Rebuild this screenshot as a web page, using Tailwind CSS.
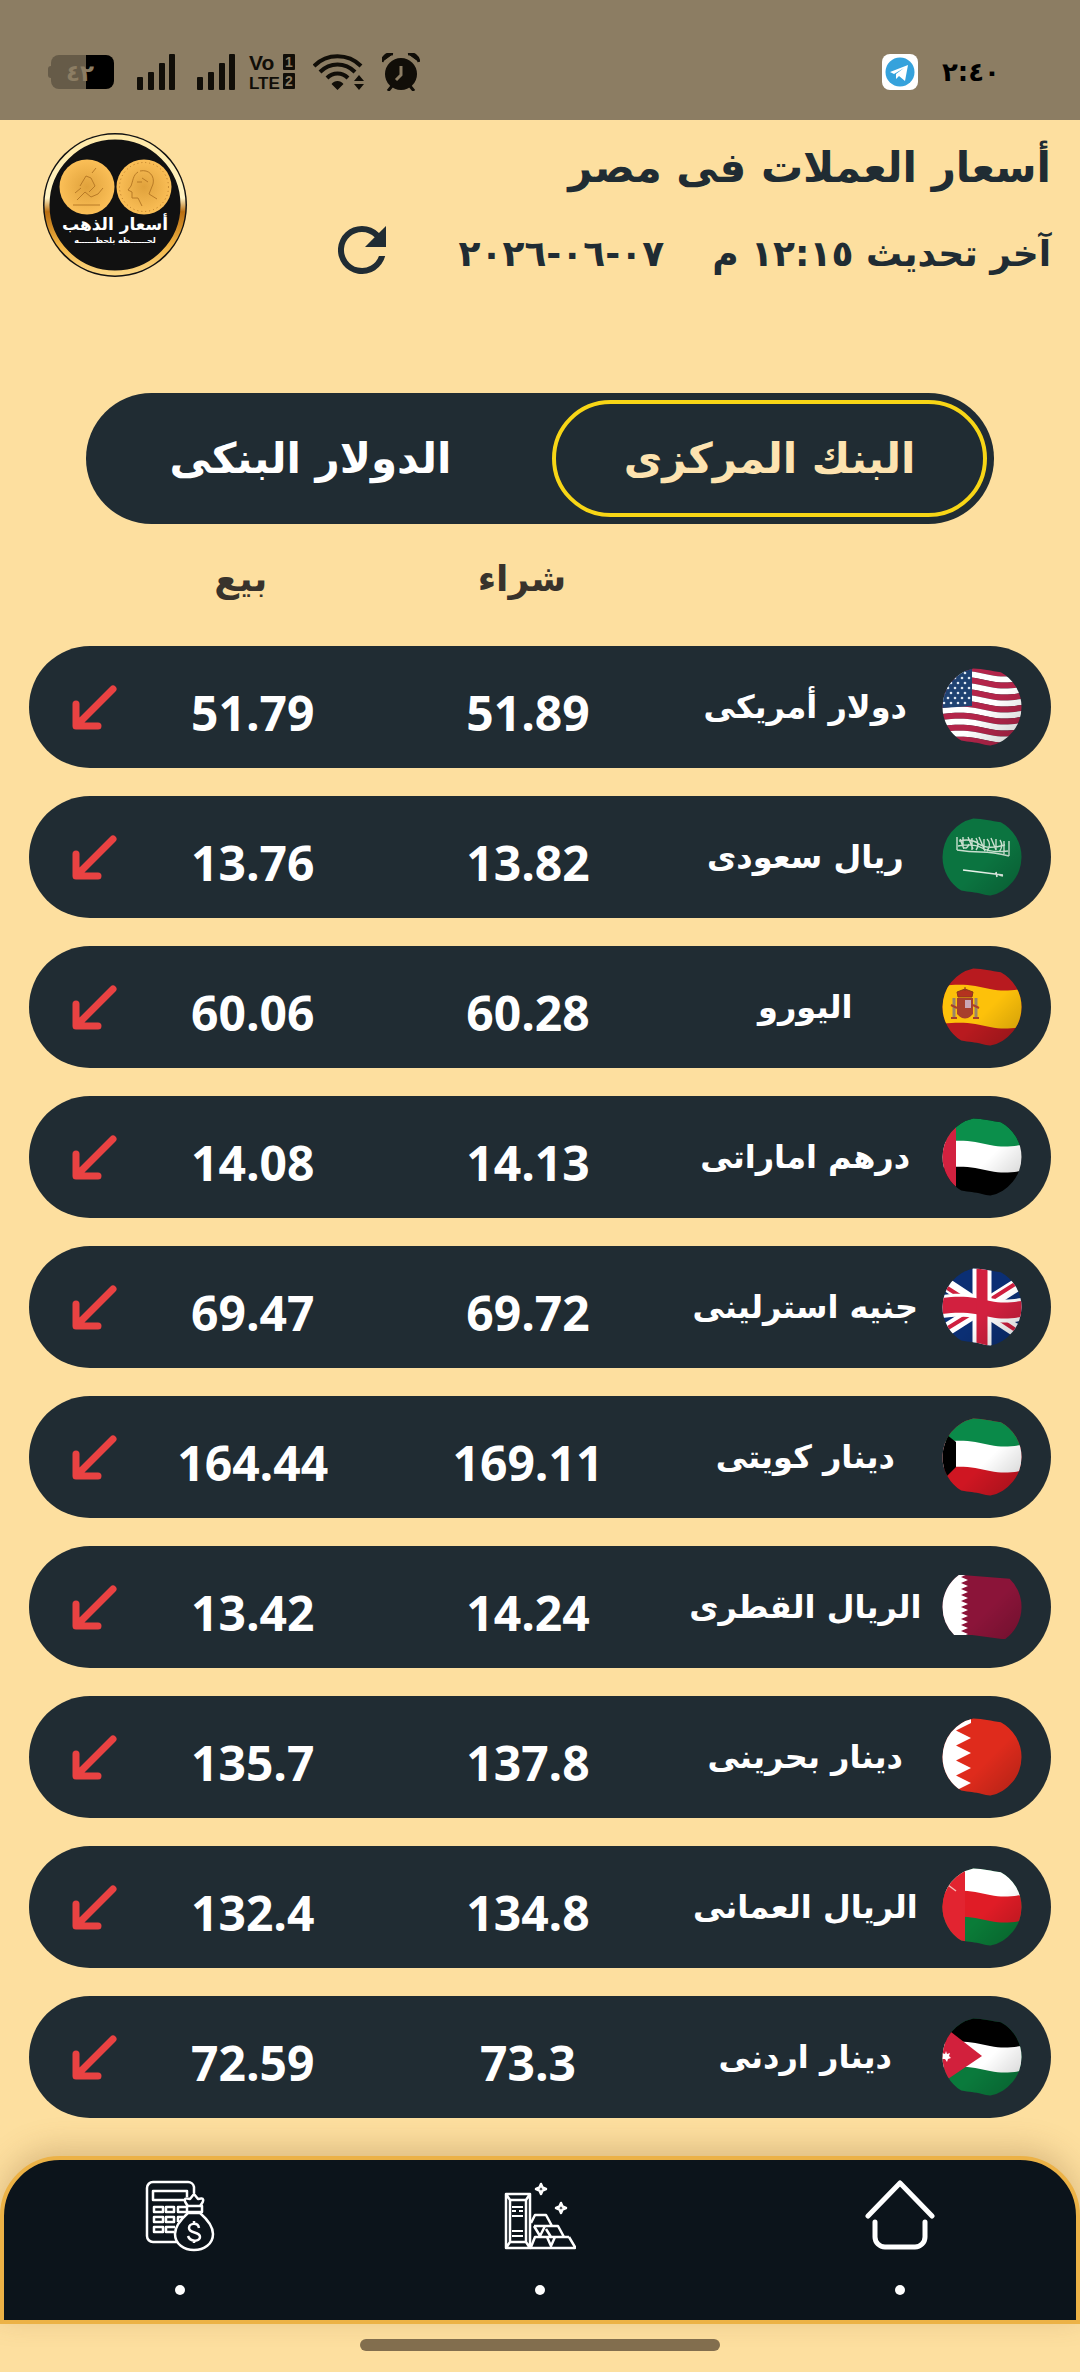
<!doctype html>
<html lang="ar" dir="rtl">

<head>
    <meta charset="UTF-8">
    <meta name="viewport" content="width=device-width, initial-scale=1.0">
    <title>أسعار العملات فى مصر</title>
    <script src="https://cdn.jsdelivr.net/npm/@tailwindcss/browser@4"></script>
</head>

<body class="bg-[#fddf9f] text-[#202c33] font-['DejaVu_Sans',sans-serif] font-bold">
    <div class="flex min-h-screen flex-col">

        <!-- status bar -->
        <div dir="ltr" class="flex h-[120px] items-center bg-[#8c7d63] pt-6 pl-12 pr-20 text-black">
            <div class="flex grow items-center gap-[22px]">
                <svg class="h-[34px] w-[67px] overflow-visible" viewBox="0 0 67 34">
                    <path d="M4 11H3a3 3 0 0 0-3 3v6a3 3 0 0 0 3 3h1z" fill="#665b48" />
                    <path d="M39 0H11a8 8 0 0 0-8 8v18a8 8 0 0 0 8 8h28z" fill="#665b48" />
                    <path d="M38 0h20a8 8 0 0 1 8 8v18a8 8 0 0 1-8 8H38z" />
                    <text x="32" y="26" font-size="23" text-anchor="middle" fill="#8c7d63">٤٢</text>
                </svg>
                <svg class="h-9 w-[38px]" viewBox="0 0 38 36" fill="#110e08">
                    <rect x="0" y="23" width="6" height="13" rx="1" />
                    <rect x="11" y="18" width="6" height="18" rx="1" />
                    <rect x="22" y="9" width="6" height="27" rx="1" />
                    <rect x="32" y="0" width="6" height="36" rx="1" />
                </svg>
                <svg class="h-9 w-[38px]" viewBox="0 0 38 36" fill="#110e08">
                    <rect x="0" y="23" width="6" height="13" rx="1" />
                    <rect x="11" y="18" width="6" height="18" rx="1" />
                    <rect x="22" y="9" width="6" height="27" rx="1" />
                    <rect x="32" y="0" width="6" height="36" rx="1" />
                </svg>
                <svg class="-ml-2 h-9 w-[46px] overflow-visible" viewBox="0 0 46 36" fill="#110e08"
                    font-family="'Liberation Sans',sans-serif">
                    <text x="0" y="16" font-size="21">Vo</text>
                    <text x="0" y="35" font-size="17">LTE</text>
                    <rect x="34" y="0" width="12" height="16" rx="1" />
                    <rect x="34" y="19" width="12" height="16" rx="1" />
                    <text x="40" y="13" font-size="14" text-anchor="middle" fill="#8c7d63">1</text>
                    <text x="40" y="32" font-size="14" text-anchor="middle" fill="#8c7d63">2</text>
                </svg>
                <svg class="-ml-1 h-9 w-[51px]" viewBox="0 0 51 36" fill="none" stroke="#110e08" stroke-width="4">
                    <path d="M1 12C14-1 35-1 48 12M7 18c10-10 25-10 35 0M14 24c6-6 15-6 21 0" />
                    <path d="M24.500 36l-6-6c3-4 9-4 12 0zM41 27l5-6 5 6zM41 30l5 6 5-6z" fill="#110e08" stroke="none" />
                </svg>
                <svg class="-ml-1 h-[38px] w-[38px]" viewBox="0 0 38 38" fill="#110e08">
                    <circle cx="19" cy="21" r="16" />
                    <path d="M0 9C1 3 5 0 11 1zM37 9C36 3 32 0 26 1z" />
                    <path d="M0 9C1 3 5 0 11 1M37 9C36 3 32 0 26 1M10 33l-4 5M28 33l4 5" stroke="#110e08" stroke-width="3" />
                    <path d="M19 13v9l-5 5" fill="none" stroke="#8c7d63" stroke-width="3" />
                </svg>
            </div>
            <div class="flex items-center gap-6">
                <svg class="h-9 w-9" viewBox="0 0 36 36">
                    <rect width="36" height="36" rx="8" fill="#fff" />
                    <circle cx="18" cy="18" r="14.500" fill="#35a2dc" />
                    <path d="M8 18l18-7-3 16-6-5-3 3v-5l8-6-10 6z" fill="#fff" />
                </svg>
                <span class="text-[26px] leading-9">٢:٤٠</span>
            </div>
        </div>

        <header class="flex items-start justify-between pt-3 pr-[29px] pl-[42px]">
            <div class="flex flex-col">
                <h1 class="text-[42px] leading-[72px] whitespace-nowrap">أسعار العملات فى مصر</h1>
                <div class="flex items-center gap-12 text-[36px] whitespace-nowrap">
                    <p class="pt-2 leading-[84px]">آخر تحديث <span dir="ltr">١٢:١٥</span> م</p>
                    <time dir="ltr" datetime="2026-06-07" class="pt-2 leading-[84px] [unicode-bidi:bidi-override]">٢٠٢٦-٠٦-٠٧</time>
                    <button type="button" aria-label="تحديث" class="mr-6">
                        <svg class="h-12 w-12" viewBox="4 4 16 16" fill="#202c33">
                            <path d="M17.650 6.350A7.958 7.958 0 0 0 12 4a8 8 0 1 0 7.730 10h-2.080A6 6 0 1 1 12 6c1.660 0 3.140.690 4.220 1.780L13 11h7V4z" />
                        </svg>
                    </button>
                </div>
            </div>
            <svg class="h-[146px] w-[146px] shrink-0" viewBox="0 0 146 146">
                <defs>
                    <linearGradient id="ring" x1="0" y1="0" x2="0" y2="1">
                        <stop offset="0" stop-color="#ffe9a8" />
                        <stop offset=".45" stop-color="#fff3c4" />
                        <stop offset=".55" stop-color="#b86d10" />
                        <stop offset=".8" stop-color="#f2b544" />
                        <stop offset="1" stop-color="#fbd682" />
                    </linearGradient>
                    <radialGradient id="coin">
                        <stop offset="0" stop-color="#e0a23c" />
                        <stop offset="1" stop-color="#fbbf57" />
                    </radialGradient>
                </defs>
                <circle cx="73" cy="73" r="72" fill="#111" />
                <circle cx="73" cy="73" r="68" fill="none" stroke="url(#ring)" stroke-width="5" />
                <circle cx="45" cy="55" r="27.500" fill="url(#coin)" />
                <circle cx="102" cy="55" r="27.500" fill="url(#coin)" />
                <g fill="none" stroke="#b87a26" stroke-width="1">
                    <circle cx="102" cy="55" r="24.500" stroke-dasharray="1 3" />
                    <path d="M31 73h27M35 68l8-8 6 5 7-3M38 54l6-10 5 2 4 8-6 6M33 61l6-5M50 41l4-5M56 62l5-6" />
                    <path d="M96 40c-5 3-5 9-7 14l-3 4 4 2v6h6l4 8M98 39c9-2 15 5 13 13l-4 10 8 5M100 46l6 4M95 50h5" />
                </g>
                <g fill="#fff" text-anchor="middle">
                    <text x="73" y="98" font-size="17">أسعار الذهب</text>
                    <text x="73" y="111" font-size="8">لحــــــظه بلحظــــــه</text>
                </g>
            </svg>
        </header>

        <main class="px-[29px] pt-[97px]">
            <div class="mx-[57px] grid h-[131px] grid-cols-2 gap-6 rounded-full bg-[#202c33] p-[7px] text-[42px] text-white" role="tablist">
                <button type="button" role="tab" aria-selected="true"
                    class="rounded-full border-4 border-[#f8d616] text-[#fde3b0] whitespace-nowrap">البنك المركزى</button>
                <button type="button" role="tab" aria-selected="false" class="whitespace-nowrap">الدولار البنكى</button>
            </div>

            <table class="w-full table-fixed border-separate border-spacing-x-0 border-spacing-y-[28px] text-center">
                <thead>
                    <tr class="h-[66px] text-[36px] text-[#38332c]">
                        <th class="w-[120px]"></th>
                        <th class="w-[25%]"></th>
                        <th class="pr-3 pb-3 leading-[54px]">شراء</th>
                        <th class="w-[25%] pr-6 pb-3 leading-[54px]">بيع</th>
                        <th class="w-[96px]"></th>
                    </tr>
                </thead>
                <tbody id="rates"></tbody>
            </table>
        </main>

        <!-- bottom navigation -->
        <nav class="mt-auto h-[168px] shrink-0 rounded-t-[60px] border-4 border-[#ecb246] bg-[#0c141b] shadow-[0_-8px_30px_rgba(120,80,40,0.25)]">
            <div class="-mx-1 grid h-full grid-cols-3">
                <a href="#" aria-label="الرئيسية" class="flex flex-col items-center justify-between pt-5 pb-[25px]">
                    <svg class="h-[70px] w-[70px]" viewBox="0 0 70 70" fill="none" stroke="#fff" stroke-width="5" stroke-linecap="round" stroke-linejoin="round">
                        <path d="M3 36L35 3l32 33M10 42v15a10 10 0 0 0 10 10h30a10 10 0 0 0 10-10V42" />
                    </svg>
                    <span class="h-[10px] w-[10px] rounded-full bg-white"></span>
                </a>
                <a href="#" aria-label="الذهب" class="flex flex-col items-center justify-between pt-5 pb-[25px]">
                    <svg class="h-[70px] w-[72px]" viewBox="0 0 72 70" fill="none" stroke="#fff" stroke-width="2.500" stroke-linejoin="round">
                        <path d="M2 14h24v54H2zM6 20h16v42H6zM2 14l4 6M26 14l-4 6M2 68l4-6M26 68l-4-6" />
                        <path d="M8 27h11M8 31h4m3 0h4M8 36h11M8 51h11M8 56h11M26 40v6" stroke-width="2" />
                        <path d="M27 43l4-8h11l6 11M30 46h24l6 11M30 46l6 10 5-10M27 67l4-10h34M47 57l-5-8M43 57l4 9 4-9M65 57l6 10v1H26" />
                        <path d="M37 4l1.500 3.500L42 9l-3.500 1.500L37 14l-1.500-3.500L32 9l3.500-1.500zM57 23l1.500 3.500L62 28l-3.500 1.500L57 33l-1.500-3.500L52 28l3.500-1.500z" />
                    </svg>
                    <span class="h-[10px] w-[10px] rounded-full bg-white"></span>
                </a>
                <a href="#" aria-label="الحاسبة" class="flex flex-col items-center justify-between pt-5 pb-[25px]">
                    <svg class="h-[72px] w-[70px]" viewBox="0 0 70 72" fill="none" stroke="#fff" stroke-width="2.500" stroke-linejoin="round">
                        <path d="M49 13V7a6 6 0 0 0-6-5H8a6 6 0 0 0-6 6v48a6 6 0 0 0 6 6h24M41 20H8V11h34v6" />
                        <path d="M9 27h9v5H9zM21 27h8v5h-8zM41 27h-8v5h8M9 37h9v5H9zM21 37h8v5h-8zM38 37h-5v5M9 47h9v5H9zM30 47h-9v5h8" />
                        <path d="M43 33C35 40 30 47 30 54c0 10 9 16 19 16s19-6 19-16c0-7-5-14-13-21z" />
                        <path d="M42 26h15v6H42zM43 26c-5-6-4-9 2-7l4-5 4 5c6-2 7 1 2 7M54 48c-1-6-10-5-10 0 0 6 11 3 11 9 0 5-10 5-12-1M49 41v3M49 60v3" />
                    </svg>
                    <span class="h-[10px] w-[10px] rounded-full bg-white"></span>
                </a>
            </div>
        </nav>
        <div class="flex h-12 shrink-0 items-start justify-center pt-[15px]">
            <div class="h-3 w-1/3 rounded-full bg-[#826e4e]"></div>
        </div>
    </div>

    <!-- flag clips: a circle with a gentle wave at top and bottom -->
    <svg class="absolute h-0 w-0">
        <defs>
            <clipPath id="circle"><circle cx="40" cy="40" r="39.500" /></clipPath>
            <clipPath id="wave" clip-path="url(#circle)"><path d="M0 6C22 0 34 1 45 3S64 5 80 12V66C70 82 52 80 40 77S22 76 0 68z" /></clipPath>
            <clipPath id="waveSmall" clip-path="url(#circle)"><path d="M0 8H20L70 12H80V72H60Q45 70 30 68H0z" /></clipPath>
            <linearGradient id="shade" x1="0" y1="0" x2="1" y2="1">
                <stop offset=".55" stop-color="#000" stop-opacity="0" />
                <stop offset="1" stop-color="#000" stop-opacity=".22" />
            </linearGradient>
        </defs>
    </svg>
</body>
<script>
    // a band across the flag, following the wave, from y to y2
    const band = (y, y2, fill) =>
        `<path d="M0 ${y}C22 ${y - 3} 34 ${y} 48 ${y + 3}S70 ${y + 4} 80 ${y + 3}V${y2 + 3}C70 ${y2 + 4} 62 ${y2 + 6} 48 ${y2 + 3}S22 ${y2 - 3} 0 ${y2}z" fill="${fill}"/>`

    const usStripes = Array.from({ length: 13 }, (_, i) =>
        band(-1 + i * 6, 5 + i * 6, i % 2 ? "#fff" : "#b3254a")).join("")
    const usStars = Array.from({ length: 28 }, (_, i) =>
        `<circle cx="${2 + (i % 4) * 7 + (Math.floor(i / 4) % 2) * 4}" cy="${6 + Math.floor(i / 4) * 5}" r="1.300" fill="#dfe8f2"/>`).join("")

    const zigzag = (x, tip, step, from, to) => {
        let d = `M0 0H${x}V${from}`
        for (let y = from; y < to; y += step) d += `L${tip} ${y + step / 2}L${x} ${y + step}`
        return d + "V80H0z"
    }

    const flags = {
        us: usStripes + `<path d="M0 0H30V39L0 41z" fill="#1f4272"/>` + usStars,
        sa: `<rect width="80" height="80" fill="#0b7440"/>
            <path d="M15 20v13M18 22l4 10M21 20v10q4 3 6-3M26 20l5 12M30 21v12M34 21q4 7 0 12M37 20l6 14M42 22v11M45 22q5 5 0 12M49 21l5 12M54 22v11M58 23q4 6-1 12M62 24v13M67 24v15M15 33q12 2 24 2t28 4M17 24q12-3 20 3t26 1M16 29q15-3 24 2t26 3" fill="none" stroke="#c8dfce" stroke-width="1.400"/>
            <path d="M21 53l40 5M54 55l1 5M57 58l4 1" fill="none" stroke="#e8f3ea" stroke-width="1.600"/>`,
        es: `<rect width="80" height="80" fill="#b81a1f"/>` + band(19, 57, "#fdc10a") +
            `<path d="M15 31h16v16q-8 9-16 0z" fill="#a8402c"/><path d="M23 33h6v8h-6z" fill="#c9a7b5"/>
            <path d="M16 30l-1-5 8-3 8 3-1 5zM23 20v4" fill="#b4331f" stroke="#8a3b1c"/>
            <path d="M12 31v20M34 31v20" stroke="#9a8468" stroke-width="3"/><path d="M9 38l6 3M31 38l6 3M9 51h6M31 51h6" stroke="#a8402c" stroke-width="2"/>`,
        ae: `<rect width="80" height="80" fill="#000"/>` + band(-6, 26, "#0b8f4b") + band(25, 51, "#fff") + `<rect width="14" height="80" fill="#d2213f"/>`,
        gb: `<rect width="80" height="80" fill="#0b2f74"/>
            <path d="M-4 12L84 70M-4 68L84 12" stroke="#fff" stroke-width="13"/>
            <path d="M-4 15L40 43M-4 67L40 40M40 38L84 10M42 42L84 70" stroke="#cf1f3f" stroke-width="4"/>
            <path d="M40 0V80" stroke="#fff" stroke-width="19"/>` + band(28, 51, "#fff") + band(31, 47, "#d2203f") +
            `<path d="M40 0V80" stroke="#d2203f" stroke-width="11"/>`,
        kw: `<rect width="80" height="80" fill="#cf1622"/>` + band(-6, 26, "#0a8a49") + band(25, 51, "#fff") + `<path d="M0 14L14 25V50L0 64z" fill="#000"/>`,
        qa: `<rect width="80" height="80" fill="#8b1439"/><path d="${zigzag(26, 19, 6, 7, 72)}" fill="#fff"/>`,
        bh: `<rect width="80" height="80" fill="#df2b1c"/><path d="${zigzag(29, 14, 15, 6, 74)}" fill="#fff"/>`,
        om: `<rect width="80" height="80" fill="#0a7c38"/>` + band(-6, 26, "#fff") + band(25, 51, "#e01c26") +
            `<rect width="23" height="80" fill="#e22430"/><path d="M6 18l8 6M7 15l5-4" stroke="#f7b9b4" stroke-width="1.500"/>`,
        jo: `<rect width="80" height="80" fill="#0a7a3c"/>` + band(-6, 27, "#000") + band(26, 51, "#fff") +
            `<path d="M0 8L40 39 0 66z" fill="#d2203c"/><path d="M4 34l1 3 3-1-1 3 2 2-3 1-1 3-2-3-3 0 1-3-1-3 3 1z" fill="#fff"/>`,
    }

    const rates = [
        ["us", "دولار أمريكى", "51.89", "51.79"],
        ["sa", "ريال سعودى", "13.82", "13.76"],
        ["es", "اليورو", "60.28", "60.06"],
        ["ae", "درهم اماراتى", "14.13", "14.08"],
        ["gb", "جنيه استرلينى", "69.72", "69.47"],
        ["kw", "دينار كويتى", "169.11", "164.44"],
        ["qa", "الريال القطرى", "14.24", "13.42"],
        ["bh", "دينار بحرينى", "137.8", "135.7"],
        ["om", "الريال العمانى", "134.8", "132.4"],
        ["jo", "دينار اردنى", "73.3", "72.59"],
    ]

    document.querySelector("#rates").innerHTML = rates.map(([flag, name, buy, sell]) => `
        <tr class="h-[122px] text-white">
            <td class="rounded-r-full bg-[#202c33] pr-[29px]">
                <svg class="h-20 w-20" viewBox="0 0 80 80">
                    <g clip-path="url(#${flag === "qa" ? "waveSmall" : "wave"})">${flags[flag]}<rect width="80" height="80" fill="url(#shade)"/></g>
                </svg>
            </td>
            <td class="bg-[#202c33] pl-1 text-[32px] whitespace-nowrap">${name}</td>
            <td class="bg-[#202c33] pt-3 font-['Open_Sans',sans-serif] text-[48px]">${buy}</td>
            <td class="bg-[#202c33] pt-3 font-['Open_Sans',sans-serif] text-[48px]">${sell}</td>
            <td class="rounded-l-full bg-[#202c33] pl-[43px] text-left">
                <svg class="inline h-[45px] w-[45px]" viewBox="0 0 45 45" fill="none" stroke="#e94242" stroke-width="7" stroke-linecap="round" stroke-linejoin="round">
                    <path d="M41 4L5 40M4 19V41H26" />
                </svg>
            </td>
        </tr>`).join("")
</script>

</html>
